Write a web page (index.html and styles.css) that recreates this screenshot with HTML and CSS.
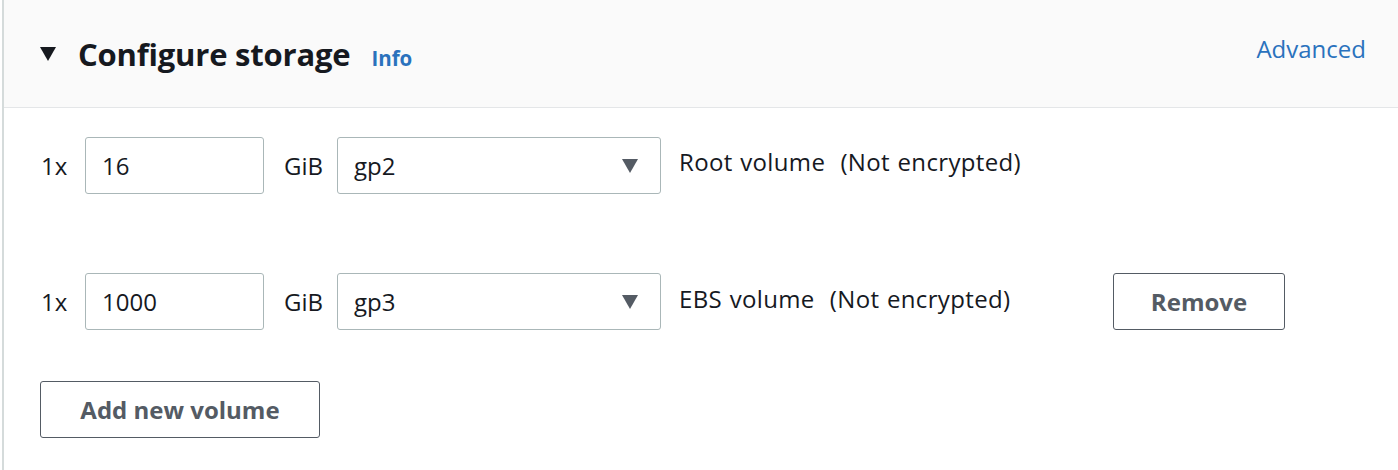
FILE: index.html
```html
<!DOCTYPE html>
<html>
<head>
<meta charset="utf-8">
<link rel="stylesheet" href="styles.css">
</head>
<body>
<section class="panel">
  <header class="panel-header">
    <div class="title-group">
      <span class="caret"></span>
      <h2 class="title">Configure storage</h2>
      <a class="info">Info</a>
    </div>
    <a class="advanced">Advanced</a>
  </header>
  <div class="panel-body">
    <div class="vol-row">
      <span class="count">1x</span>
      <div class="input">16</div>
      <span class="unit">GiB</span>
      <div class="select"><span>gp2</span><span class="sel-caret"></span></div>
      <span class="vol-label">Root volume&nbsp; (Not encrypted)</span>
    </div>
    <div class="vol-row second">
      <span class="count">1x</span>
      <div class="input">1000</div>
      <span class="unit">GiB</span>
      <div class="select"><span>gp3</span><span class="sel-caret"></span></div>
      <span class="vol-label">EBS volume&nbsp; (Not encrypted)</span>
      <button class="btn remove">Remove</button>
    </div>
    <button class="btn add">Add new volume</button>
  </div>
</section>
</body>
</html>
```
FILE: styles.css
```css
html, body {
  margin: 0;
  padding: 0;
  background: #ffffff;
}
body {
  font-family: "Open Sans", "Noto Sans", sans-serif;
  color: #16191f;
  width: 1398px;
  height: 470px;
  overflow: hidden;
}
.panel {
  margin-left: 2px;
  border-left: 2px solid #d5dbdb;
  height: 470px;
}
.panel-header {
  height: 107px;
  background: #fafafa;
  border-bottom: 1px solid #e4e6e8;
  display: flex;
  justify-content: space-between;
  align-items: flex-start;
  padding: 0 32px 0 36px;
}
.title-group {
  display: flex;
  align-items: center;
  margin-top: 33px;
}
.caret {
  width: 0;
  height: 0;
  border-left: 8.5px solid transparent;
  border-right: 8.5px solid transparent;
  border-top: 14px solid #16191f;
  margin-right: 22px;
}
.title {
  margin: 0;
  font-size: 31px;
  font-weight: 700;
  letter-spacing: -0.2px;
  line-height: 42px;
}
.info {
  color: #2a72bd;
  font-size: 20.5px;
  font-weight: 700;
  margin-left: 21px;
  margin-top: 8px;
}
.advanced {
  color: #2a72bd;
  font-size: 24px;
  margin-top: 32px;
  line-height: 34px;
}
.panel-body {
  padding: 29px 0 0 37px;
}
.vol-row {
  display: flex;
  align-items: center;
  height: 57px;
  font-size: 24px;
}
.vol-row.second {
  margin-top: 79px;
}
.count {
  width: 44px;
}
.input, .select {
  box-sizing: border-box;
  height: 57px;
  border: 1px solid #aab7b8;
  border-radius: 3px;
  display: flex;
  align-items: center;
  padding: 0 16px;
  font-size: 24px;
}
.input {
  width: 179px;
}
.unit {
  margin-left: 20px;
  width: 53px;
}
.select {
  width: 324px;
  justify-content: space-between;
  padding-right: 22px;
}
.sel-caret {
  width: 0;
  height: 0;
  border-left: 8.5px solid transparent;
  border-right: 8.5px solid transparent;
  border-top: 14px solid #545b64;
}
.vol-label {
  margin-left: 18px;
  width: 434px;
  margin-top: -8px;
  letter-spacing: 0.35px;
  word-spacing: 1px;
}
.vol-row.second .vol-label {
  margin-top: -6px;
}
.btn {
  box-sizing: border-box;
  height: 57px;
  background: #ffffff;
  border: 1px solid #545b64;
  border-radius: 3px;
  color: #545b64;
  font-family: "Open Sans", "Noto Sans", sans-serif;
  font-weight: 700;
  font-size: 24px;
  padding: 0;
}
.remove {
  width: 172px;
}
.add {
  margin-top: 51px;
  width: 280px;
  margin-left: -1px;
}
```
